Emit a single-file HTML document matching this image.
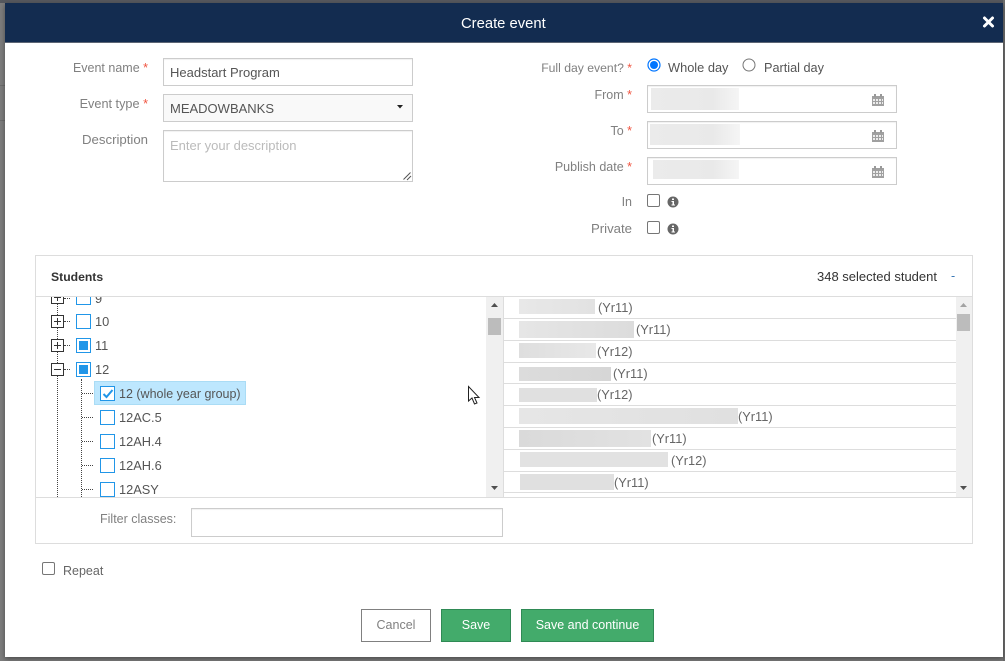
<!DOCTYPE html>
<html><head><meta charset="utf-8"><style>
html,body{margin:0;padding:0}
body{width:1005px;height:661px;overflow:hidden;background:#7d7d7d;position:relative;font-family:"Liberation Sans",sans-serif;font-size:12.5px;color:#555}
div,span{position:absolute;box-sizing:border-box}
.t{white-space:nowrap;line-height:16px}
.l{color:#808080;text-align:right;width:140px}
.s{color:#f0533f;position:static}
.in{border:1px solid #ccc;background:#fff;box-shadow:inset 0 1px 1px rgba(0,0,0,.06)}
.blur{background:linear-gradient(90deg,#ebebeb,#e9e9e9 70%,#f5f5f5)}
.cb{width:13px;height:13px;border:1px solid #767676;border-radius:2px;background:#fff}
.tb{width:15px;height:15px;border:1px solid #2196e8;background:#fff}
.tb.h:after{content:"";position:absolute;left:2px;top:2px;width:9px;height:9px;background:#2196e8}
.pm{width:13px;height:13px;border:1px solid #333;background:#fff}
.pm:before{content:"";position:absolute;left:2px;top:5px;width:7px;height:1px;background:#333}
.pm.p:after{content:"";position:absolute;left:5px;top:2px;width:1px;height:7px;background:#333}
.dh{height:1px;border-top:1px dotted #444}
.dv{width:1px;border-left:1px dotted #444}
.n{color:#555;font-size:12.8px}
.r{height:1px;background:#ddd;left:504px;width:452px}
.y{color:#666;font-size:12.8px}
.btn{top:609px;height:33px;line-height:31px;text-align:center;color:#fff;background:#43ab6b;border:1px solid #2f8a55;font-size:12.5px}
</style></head><body>
<div style="left:0;top:0;width:1005px;height:3px;background:#55585e"></div>
<div style="left:0;top:85px;width:5px;height:1px;background:#6c6c6c"></div>
<div style="left:0;top:120px;width:5px;height:1px;background:#6c6c6c"></div>
<div style="left:1003px;top:0;width:2px;height:661px;background:#6d6d6d"></div>
<div style="left:5px;top:3px;width:998px;height:654px;background:#fff;box-shadow:0 2px 5px rgba(0,0,0,.4)"></div>
<div style="left:5px;top:3px;width:998px;height:40px;background:#132c50;border-bottom:1px solid #5d6675"></div>
<div class="t" style="left:461px;top:16px;color:#fff;font-size:14.8px">Create event</div>
<svg style="position:absolute;left:982px;top:15px" width="13" height="14" viewBox="0 0 13 14"><path d="M2.500 3l8 8M10.500 3l-8 8" stroke="#fff" stroke-width="3" stroke-linecap="round"/></svg>

<div class="t l" style="left:8px;top:60px">Event name <span class="s">*</span></div>
<div class="in" style="left:163px;top:58px;width:250px;height:28px"></div>
<div class="t" style="left:170px;top:65px;font-size:13px">Headstart Program</div>
<div class="t l" style="left:8px;top:96px;font-size:12.7px">Event type <span class="s">*</span></div>
<div class="in" style="left:163px;top:94px;width:250px;height:28px;background:#f9f9f9;box-shadow:none"></div>
<div class="t" style="left:170px;top:101px;font-size:13px">MEADOWBANKS</div>
<svg style="position:absolute;left:397px;top:105px" width="6" height="4"><path d="M0 0h6L3 3.500z" fill="#222"/></svg>
<div class="t l" style="left:8px;top:132px;font-size:13.2px">Description</div>
<div class="in" style="left:163px;top:130px;width:250px;height:52px"></div>
<div class="t" style="left:170px;top:138px;color:#bbb;font-size:13px">Enter your description</div>
<svg style="position:absolute;left:402px;top:171px" width="10" height="10"><path d="M1.500 8.500L8.500 1.500M5 9L9 5" stroke="#555" stroke-width="1"/></svg>

<div class="t l" style="left:492px;top:60px;font-size:12.2px">Full day event? <span class="s">*</span></div>
<svg style="position:absolute;left:647px;top:58px" width="14" height="14"><circle cx="7" cy="7" r="6" fill="#fff" stroke="#0075ff" stroke-width="1.200"/><circle cx="7" cy="7" r="4" fill="#0075ff"/></svg>
<div class="t" style="left:668px;top:60px;font-size:12.8px">Whole day</div>
<svg style="position:absolute;left:742px;top:58px" width="14" height="14"><circle cx="7" cy="7" r="6" fill="#fff" stroke="#767676"/></svg>
<div class="t" style="left:764px;top:60px;font-size:12.7px">Partial day</div>

<div class="t l" style="left:492px;top:87px">From <span class="s">*</span></div>
<div class="in" style="left:647px;top:85px;width:250px;height:28px"></div>
<div class="blur" style="left:651px;top:88px;width:88px;height:22px"></div>
<div class="t l" style="left:492px;top:123px">To <span class="s">*</span></div>
<div class="in" style="left:647px;top:121px;width:250px;height:28px"></div>
<div class="blur" style="left:650px;top:124px;width:90px;height:21px"></div>
<div class="t l" style="left:492px;top:159px">Publish date <span class="s">*</span></div>
<div class="in" style="left:647px;top:157px;width:250px;height:28px"></div>
<div class="blur" style="left:653px;top:160px;width:86px;height:19px"></div>
<svg style="position:absolute;left:872px;top:93px" width="12" height="13" viewBox="0 0 12 13"><path d="M0 3h12v10H0z" fill="#a0a0a0"/><path d="M1 6h2v2H1zM4 6h2v2H4zM7 6h2v2H7zM10 6h1v2h-1zM1 9h2v2H1zM4 9h2v2H4zM7 9h2v2H7zM10 9h1v2h-1z" fill="#ececec"/><path d="M2 1h2v3H2zM8 1h2v3H8z" fill="#999"/></svg>
<svg style="position:absolute;left:872px;top:129px" width="12" height="13" viewBox="0 0 12 13"><path d="M0 3h12v10H0z" fill="#a0a0a0"/><path d="M1 6h2v2H1zM4 6h2v2H4zM7 6h2v2H7zM10 6h1v2h-1zM1 9h2v2H1zM4 9h2v2H4zM7 9h2v2H7zM10 9h1v2h-1z" fill="#ececec"/><path d="M2 1h2v3H2zM8 1h2v3H8z" fill="#999"/></svg>
<svg style="position:absolute;left:872px;top:165px" width="12" height="13" viewBox="0 0 12 13"><path d="M0 3h12v10H0z" fill="#a0a0a0"/><path d="M1 6h2v2H1zM4 6h2v2H4zM7 6h2v2H7zM10 6h1v2h-1zM1 9h2v2H1zM4 9h2v2H4zM7 9h2v2H7zM10 9h1v2h-1z" fill="#ececec"/><path d="M2 1h2v3H2zM8 1h2v3H8z" fill="#999"/></svg>

<div class="t l" style="left:492px;top:194px">In</div>
<div class="cb" style="left:647px;top:194px"></div>
<svg style="position:absolute;left:667px;top:196px" width="12" height="12"><circle cx="6" cy="6" r="5.500" fill="#666"/><path d="M5 2.500h2v1.500H5zM4.500 5h2.500v3.500h1v1H4.500v-1h1V6h-1z" fill="#fff"/></svg>
<div class="t l" style="left:492px;top:221px;font-size:13.200px">Private</div>
<div class="cb" style="left:647px;top:221px"></div>
<svg style="position:absolute;left:667px;top:223px" width="12" height="12"><circle cx="6" cy="6" r="5.500" fill="#666"/><path d="M5 2.500h2v1.500H5zM4.500 5h2.500v3.500h1v1H4.500v-1h1V6h-1z" fill="#fff"/></svg>

<div style="left:35px;top:255px;width:938px;height:289px;border:1px solid #ddd;background:#fff"></div>
<div style="left:36px;top:296px;width:936px;height:1px;background:#ddd"></div>
<div class="t" style="left:51px;top:269px;color:#333;font-weight:bold;font-size:12.2px">Students</div>
<div class="t" style="left:817px;top:269px;color:#333;font-size:13px">348 selected student</div>
<div class="t" style="left:951px;top:268px;color:#3a78b5">-</div>

<div style="left:36px;top:297px;width:451px;height:200px;overflow:hidden">
<div class="dv" style="left:21px;top:0;height:200px"></div>
<div class="dv" style="left:45px;top:82px;height:118px"></div>
<div class="pm p" style="left:15px;top:-6px"></div><div class="dh" style="left:28px;top:1px;width:6px"></div>
<div class="tb" style="left:40px;top:-7px"></div><div class="t n" style="left:59px;top:-6px">9</div>
<div class="pm p" style="left:15px;top:18px"></div><div class="dh" style="left:28px;top:24px;width:6px"></div>
<div class="tb" style="left:40px;top:17px"></div><div class="t n" style="left:59px;top:17px">10</div>
<div class="pm p" style="left:15px;top:42px"></div><div class="dh" style="left:28px;top:48px;width:6px"></div>
<div class="tb h" style="left:40px;top:41px"></div><div class="t n" style="left:59px;top:41px">11</div>
<div class="pm" style="left:15px;top:66px"></div><div class="dh" style="left:28px;top:72px;width:6px"></div>
<div class="tb h" style="left:40px;top:65px"></div><div class="t n" style="left:59px;top:65px">12</div>
<div style="left:58px;top:84px;width:152px;height:24px;background:#bde7fe;border:1px solid #aadcf5"></div>
<div class="dh" style="left:46px;top:96px;width:11px"></div>
<div class="tb" style="left:64px;top:89px"></div>
<svg style="position:absolute;left:66px;top:92px" width="12" height="10"><path d="M1.500 5l3 3 6-7" fill="none" stroke="#2196e8" stroke-width="2"/></svg>
<div class="t n" style="left:83px;top:89px;font-size:12.5px">12 (whole year group)</div>
<div class="dh" style="left:46px;top:120px;width:11px"></div>
<div class="tb" style="left:64px;top:113px"></div><div class="t n" style="left:83px;top:113px">12AC.5</div>
<div class="dh" style="left:46px;top:144px;width:11px"></div>
<div class="tb" style="left:64px;top:137px"></div><div class="t n" style="left:83px;top:137px">12AH.4</div>
<div class="dh" style="left:46px;top:168px;width:11px"></div>
<div class="tb" style="left:64px;top:161px"></div><div class="t n" style="left:83px;top:161px">12AH.6</div>
<div class="dh" style="left:46px;top:192px;width:11px"></div>
<div class="tb" style="left:64px;top:185px"></div><div class="t n" style="left:83px;top:185px">12ASY</div>
</div>

<div style="left:486px;top:297px;width:17px;height:200px;background:#f0f0f0"></div>
<div style="left:503px;top:297px;width:1px;height:200px;background:#ddd"></div>
<div style="left:488px;top:318px;width:13px;height:17px;background:#bcbcbc"></div>
<svg style="position:absolute;left:491px;top:303px" width="7" height="4"><path d="M0 4L3.500 0 7 4z" fill="#505050"/></svg>
<svg style="position:absolute;left:491px;top:486px" width="7" height="4"><path d="M0 0L3.500 4 7 0z" fill="#505050"/></svg>

<div style="left:956px;top:297px;width:16px;height:200px;background:#f0f0f0"></div>
<div style="left:957px;top:314px;width:13px;height:17px;background:#bcbcbc"></div>
<svg style="position:absolute;left:960px;top:303px" width="7" height="4"><path d="M0 4L3.500 0 7 4z" fill="#a3a3a3"/></svg>
<svg style="position:absolute;left:960px;top:486px" width="7" height="4"><path d="M0 0L3.500 4 7 0z" fill="#505050"/></svg>

<div class="r" style="top:318px"></div><div class="r" style="top:340px"></div><div class="r" style="top:362px"></div><div class="r" style="top:383px"></div><div class="r" style="top:405px"></div><div class="r" style="top:427px"></div><div class="r" style="top:449px"></div><div class="r" style="top:471px"></div><div class="r" style="top:492px"></div>

<div style="left:519px;top:299px;width:76px;height:15px;background:linear-gradient(90deg,#e8e8e8,#e2e2e2)"></div><div class="t y" style="left:598px;top:300px">(Yr11)</div>
<div style="left:519px;top:321px;width:115px;height:17px;background:linear-gradient(90deg,#e6e6e6,#dcdcdc)"></div><div class="t y" style="left:636px;top:322px">(Yr11)</div>
<div style="left:519px;top:343px;width:77px;height:15px;background:linear-gradient(90deg,#dedede,#e8e8e8)"></div><div class="t y" style="left:597px;top:344px">(Yr12)</div>
<div style="left:519px;top:367px;width:92px;height:14px;background:linear-gradient(90deg,#dcdcdc,#d6d6d6)"></div><div class="t y" style="left:613px;top:366px">(Yr11)</div>
<div style="left:519px;top:388px;width:78px;height:14px;background:#e0e0e0"></div><div class="t y" style="left:597px;top:387px">(Yr12)</div>
<div style="left:519px;top:408px;width:219px;height:16px;background:linear-gradient(90deg,#e6e6e6,#e0e0e0)"></div><div class="t y" style="left:738px;top:409px">(Yr11)</div>
<div style="left:519px;top:430px;width:132px;height:17px;background:linear-gradient(90deg,#dadada,#e2e2e2)"></div><div class="t y" style="left:652px;top:431px">(Yr11)</div>
<div style="left:520px;top:452px;width:148px;height:15px;background:#e2e2e2"></div><div class="t y" style="left:671px;top:453px">(Yr12)</div>
<div style="left:520px;top:474px;width:94px;height:16px;background:#e0e0e0"></div><div class="t y" style="left:614px;top:475px">(Yr11)</div>

<div style="left:36px;top:497px;width:936px;height:1px;background:#ddd"></div>
<div class="t" style="left:100px;top:511px;color:#808080;font-size:12.5px">Filter classes:</div>
<div class="in" style="left:191px;top:508px;width:312px;height:29px"></div>

<div class="cb" style="left:42px;top:562px"></div>
<div class="t" style="left:63px;top:563px;color:#666">Repeat</div>

<div class="btn" style="left:361px;width:70px;background:#fff;color:#808080;border-color:#808080">Cancel</div>
<div class="btn" style="left:441px;width:70px">Save</div>
<div class="btn" style="left:521px;width:133px">Save and continue</div>

<svg style="position:absolute;left:467px;top:385px" width="14" height="21" viewBox="0 0 14 21"><path d="M1.500 1.500V16l3.500-3 2.500 6 2.500-1-2.500-5.500H12z" fill="#fff" stroke="#222" stroke-width="1"/></svg>
</body></html>
